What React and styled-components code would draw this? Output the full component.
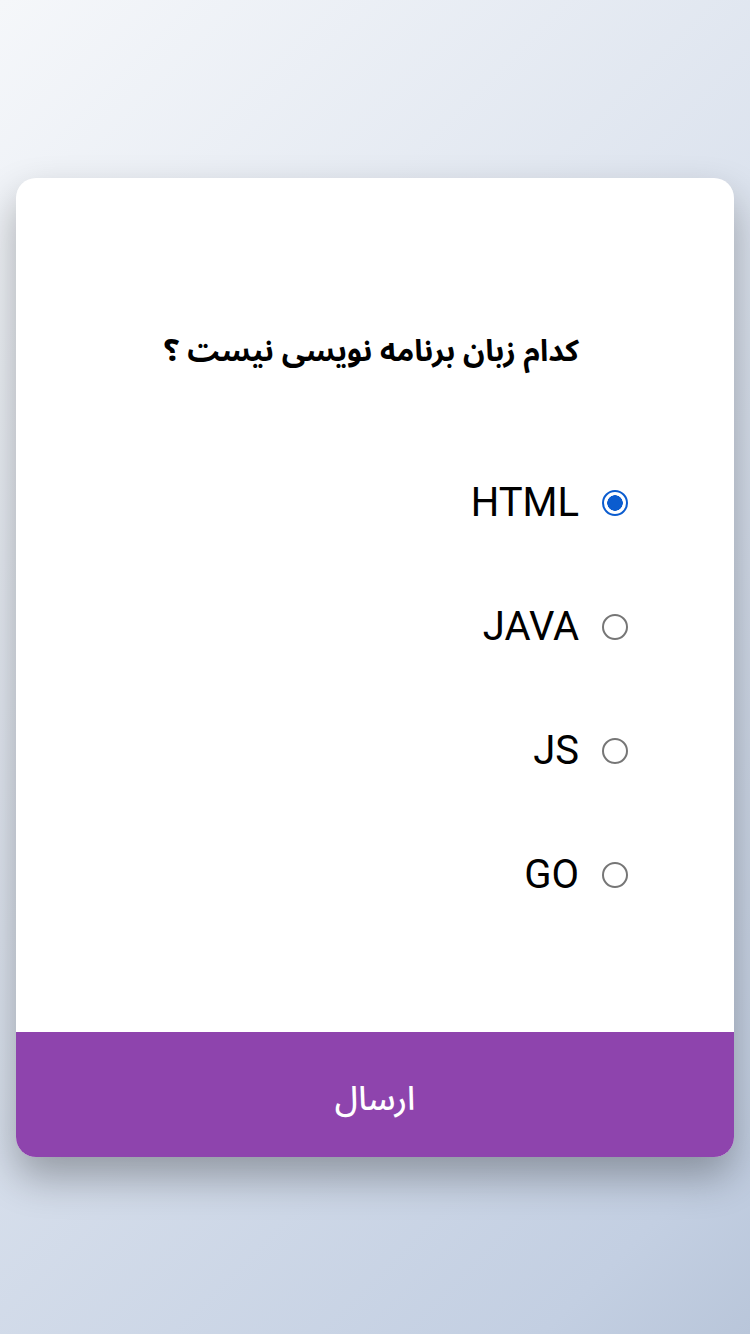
import React, { useState } from "react";
import styled, { createGlobalStyle } from "styled-components";

const Global = createGlobalStyle`
  html, body { margin: 0; padding: 0; }
  body {
    min-height: 100vh;
    background: linear-gradient(135deg, #f5f7fa 0%, #c3cfe2 90%, #b9c6da 100%);
    font-family: "DejaVu Sans", "Noto Sans", sans-serif;
  }
`;

const Page = styled.div`
  min-height: 100vh;
  display: flex;
  align-items: center;
  justify-content: center;
  padding: 0 16px;
  box-sizing: border-box;
`;

const Card = styled.form`
  width: 100%;
  height: 979px;
  background: #fff;
  border-radius: 20px;
  overflow: hidden;
  display: flex;
  flex-direction: column;
  box-shadow: 0 20px 40px rgba(0, 0, 0, 0.3);
  direction: rtl;
`;

const Body = styled.div`
  flex: 1;
  padding: 150px 106px 0;
  display: flex;
  flex-direction: column;
`;

const Title = styled.h2`
  margin: 0 0 65px;
  padding-right: 7px;
  text-align: center;
  font-family: "Noto Sans Arabic", "DejaVu Sans", sans-serif;
  font-weight: bold;
  font-size: 30px;
  line-height: 48px;
  color: #000;
`;

const Options = styled.div`
  display: flex;
  flex-direction: column;
`;

const Option = styled.label`
  display: flex;
  align-items: center;
  gap: 23px;
  height: 124px;
  font-family: Roboto, sans-serif;
  font-size: 40px;
  color: #000;
  cursor: pointer;
`;

const Radio = styled.input`
  appearance: none;
  -webkit-appearance: none;
  box-sizing: border-box;
  width: 26px;
  height: 26px;
  margin: 0;
  border-radius: 50%;
  border: 2px solid #767676;
  background: #fff;
  flex: none;
  cursor: pointer;

  &:checked {
    border: 2.5px solid #0b5ccf;
    background: radial-gradient(circle, #0b5ccf 0 7.5px, #fff 8px);
  }
`;

const Submit = styled.button`
  height: 125px;
  padding: 10px 0 0;
  border: none;
  background: #8e44ad;
  color: #fff;
  font-family: "Noto Sans Arabic", "DejaVu Sans", sans-serif;
  font-weight: 500;
  font-size: 33px;
  cursor: pointer;
`;

const items = ["HTML", "JAVA", "JS", "GO"];

export default function App() {
  const [val, setVal] = useState("HTML");
  return (
    <>
      <Global />
      <Page>
        <Card onSubmit={(e) => e.preventDefault()}>
          <Body>
            <Title>کدام زبان برنامه نویسی نیست ؟</Title>
            <Options>
              {items.map((it) => (
                <Option key={it}>
                  <Radio
                    type="radio"
                    name="lang"
                    checked={val === it}
                    onChange={() => setVal(it)}
                  />
                  <span>{it}</span>
                </Option>
              ))}
            </Options>
          </Body>
          <Submit type="submit">ارسال</Submit>
        </Card>
      </Page>
    </>
  );
}
